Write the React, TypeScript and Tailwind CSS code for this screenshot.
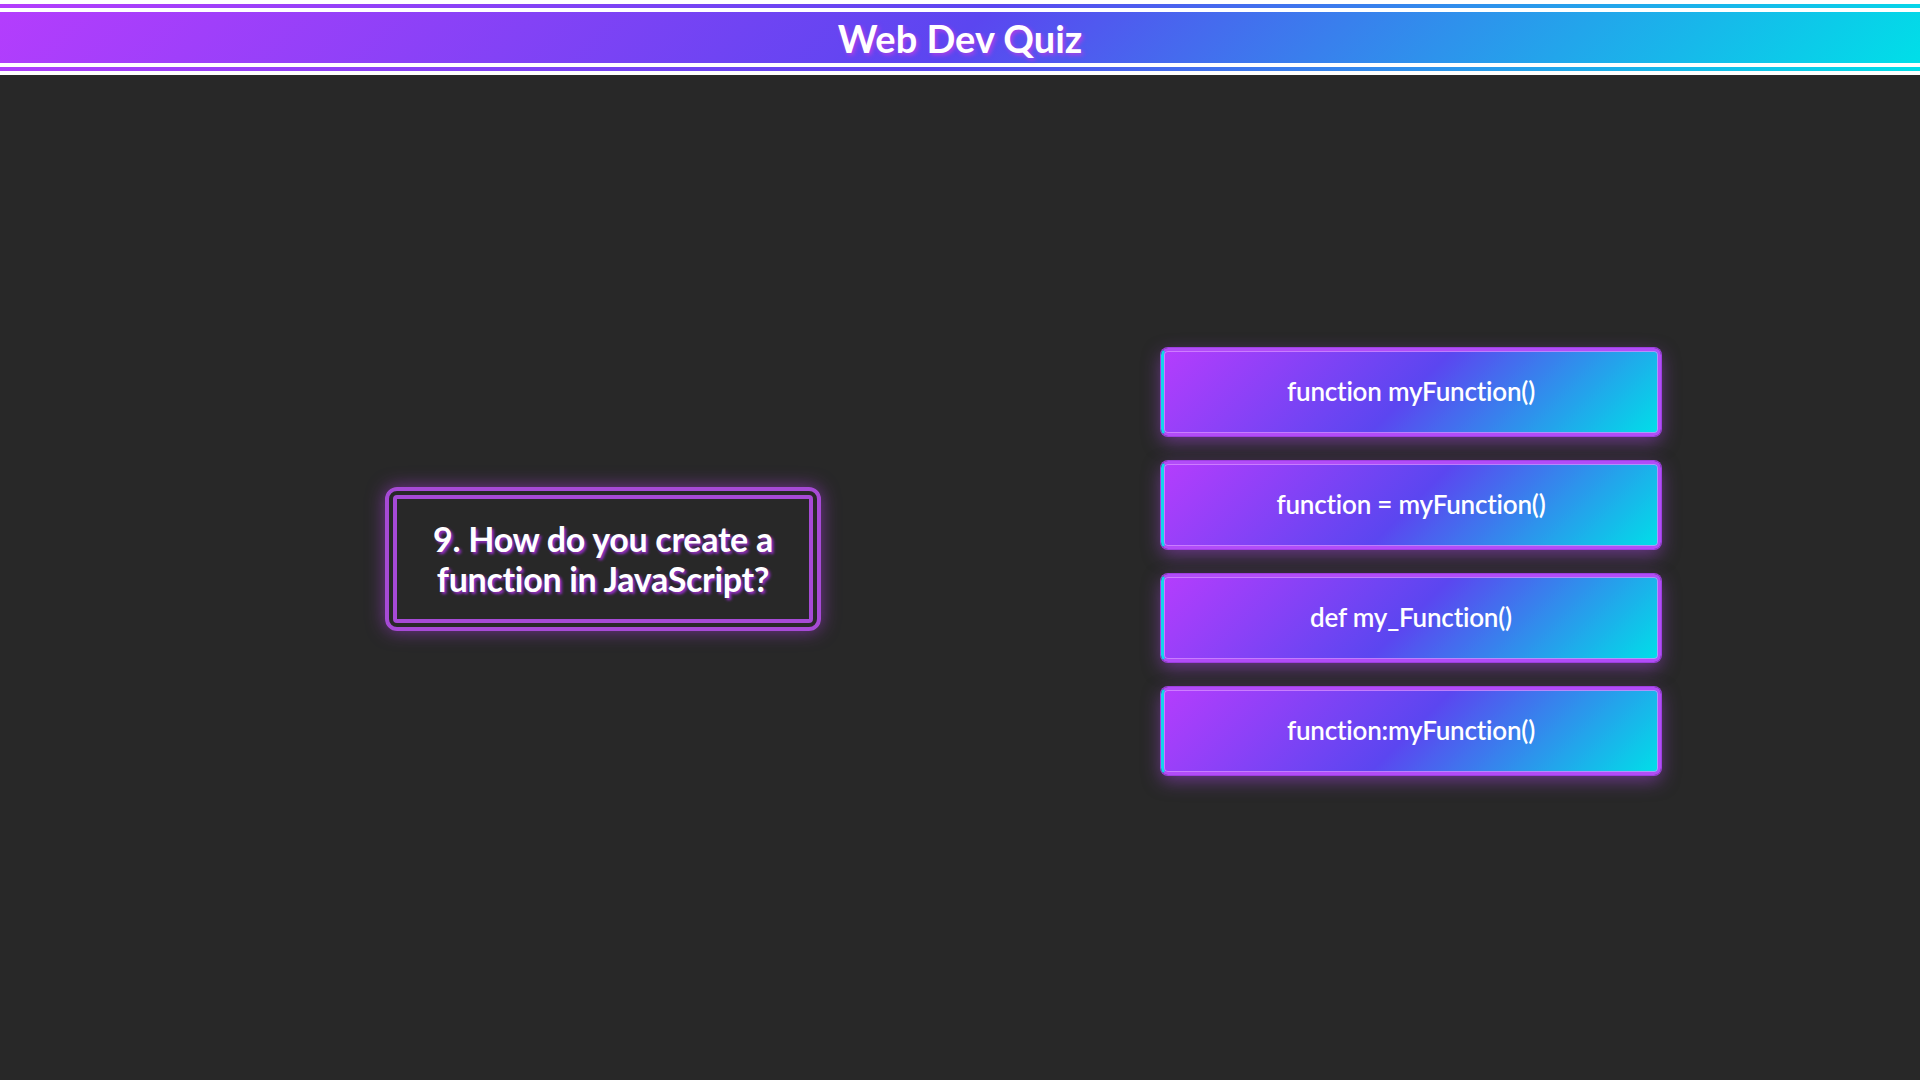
const ANSWERS = [
  "function myFunction()",
  "function = myFunction()",
  "def my_Function()",
  "function:myFunction()",
];

const GRADIENT = "bg-[linear-gradient(135deg,#b43dfd_0%,#5b46f0_50%,#00dfe8_100%)]";

function Header() {
  return (
    <header className={`${GRADIENT} border-y-4 border-white py-1`}>
      <div
        className={`${GRADIENT} flex h-[59px] items-center justify-center border-y-4 border-white`}
      >
        <h1 className="text-[38px] leading-none font-bold text-white [text-shadow:2px_2px_4px_#b23fe6]">
          Web Dev Quiz
        </h1>
      </div>
    </header>
  );
}

function AnswerButton({ label }: { label: string }) {
  return (
    <button
      className={`${GRADIENT} flex h-[88px] w-[500px] items-center justify-center rounded-[7px] border-[3px] border-[#b24cf8] border-l-[#14d6ea] text-[26px] font-semibold tracking-[-0.2px] text-white shadow-[inset_0_0_0_1px_rgba(214,140,255,0.8),0_0_0_1px_#9d3fe0,0_6px_18px_rgba(170,70,230,0.5)]`}
    >
      {label}
    </button>
  );
}

export default function App() {
  return (
    <div className="min-h-screen bg-[#282828] font-['Lato','Noto_Sans',sans-serif]">
      <Header />
      <main className="flex min-h-[1005px] items-center gap-[340px] pb-[37px] pl-[385px]">
        <div className="w-[436px] rounded-[12px] border-[12px] border-double border-[#a64ad6] px-3 py-[20px] text-center shadow-[0_0_18px_rgba(168,60,220,0.6)]">
          <p className="text-[34px] leading-[40px] font-bold tracking-[-0.3px] text-white [text-shadow:2px_2px_3px_#9b2fd0]">
            9. How do you create a function in JavaScript?
          </p>
        </div>
        <div className="flex flex-col gap-[25px] pt-1">
          {ANSWERS.map((a) => (
            <AnswerButton key={a} label={a} />
          ))}
        </div>
      </main>
    </div>
  );
}
